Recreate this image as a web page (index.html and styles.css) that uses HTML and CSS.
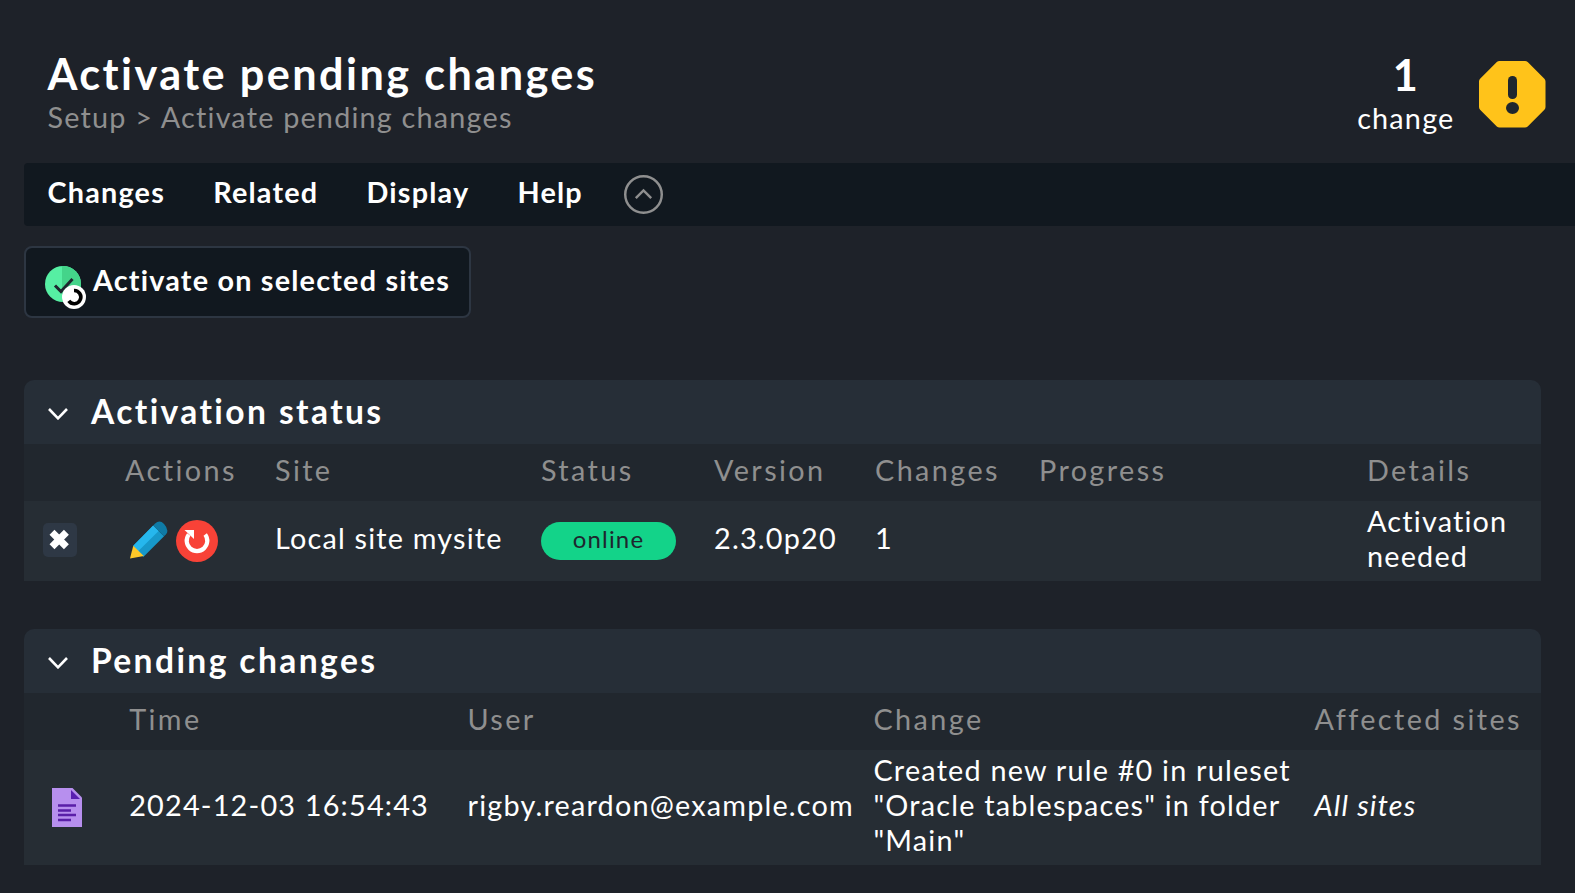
FILE: index.html
```html
<!DOCTYPE html>
<html lang="en">
<head>
<meta charset="utf-8">
<title>Activate pending changes</title>
<link rel="stylesheet" href="styles.css">
</head>
<body>
<header class="top">
  <div class="titles">
    <h1 class="title">Activate pending changes</h1>
    <div class="breadcrumb">Setup &gt; Activate pending changes</div>
  </div>
  <div class="counter">
    <div class="counter-text"><span class="counter-number">1</span><span class="counter-label">change</span></div>
    <svg class="warning" viewBox="0 0 68 68">
      <path d="M21.500 1H47Q48.600 1 49.700 2.100L66.400 18.800Q67.500 19.900 67.500 21.500V47Q67.500 48.600 66.400 49.700L49.700 66.400Q48.600 67.500 47 67.500H21.500Q19.900 67.500 18.800 66.400L2.100 49.700Q1 48.600 1 47V21.500Q1 19.900 2.100 18.800L18.800 2.100Q19.900 1 21.500 1Z" fill="#ffc31a"/>
      <rect x="30" y="16" width="9" height="23" rx="4.300" fill="#1e262e"/>
      <ellipse cx="34.500" cy="48" rx="6.500" ry="6" fill="#1e262e"/>
    </svg>
  </div>
</header>
<nav class="menu">
  <span>Changes</span><span>Related</span><span>Display</span><span>Help</span>
  <svg class="toggle" viewBox="0 0 38 38"><circle cx="19" cy="19" r="17.800"/><path d="M11.500 22.500L19 15L26.500 22.500"/></svg>
</nav>
<button class="activate">
  <svg class="activate-icon" viewBox="0 0 42 44">
    <circle cx="18" cy="18" r="18" fill="#56efa3"/>
    <path d="M17 0H18A18 18 0 0 1 18 36H17Z" fill="#44d48a"/>
    <path d="M10 19.500L16 25.500L27.500 13" fill="none" stroke="#1e262e" stroke-width="3"/>
    <circle cx="29" cy="31" r="12" fill="#fff"/>
    <path d="M29 24.500A6.600 6.600 0 1 1 23.800 34.900" fill="none" stroke="#000" stroke-width="3.600"/>
  </svg>
  <span>Activate on selected sites</span>
</button>
<section class="panel status">
  <h2 class="panel-title"><svg class="chevron" viewBox="0 0 20 12"><path d="M1 1L10 10.300L19 1"/></svg>Activation status</h2>
  <div class="row head"><span></span><span>Actions</span><span>Site</span><span>Status</span><span>Version</span><span>Changes</span><span>Progress</span><span>Details</span></div>
  <div class="row data">
    <span class="check"><svg viewBox="0 0 34 34"><path d="M9 9.300L23.400 23.700M23.400 9.300L9 23.700" stroke="#fff" stroke-width="7"/></svg></span>
    <span class="actions">
      <svg class="pencil" viewBox="0 0 40 40">
        <path d="M4.300 25L24.500 4.500L35.500 15.500L14.500 36.500Z" fill="#1798c9"/>
        <path d="M4.300 25L24.500 4.500L30 10L9 31Z" fill="#26b7ed"/>
        <path d="M24.500 4.500L26.500 2.500Q31-1.500 35.500 3Q41 9 37.500 13.500L35.500 15.500Z" fill="#0f7ba6"/>
        <path d="M4.300 25L15 35.500L1 38Z" fill="#ffc929"/>
      </svg>
      <svg class="restart" viewBox="0 0 42 42">
        <circle cx="21" cy="21" r="21" fill="#f84237"/>
        <path d="M12.800 14.500A10.300 10.300 0 1 0 29.200 14.500" fill="none" stroke="#fff" stroke-width="4.200"/>
        <path d="M8.500 10H18V19Z" fill="#fff"/>
      </svg>
    </span>
    <span>Local site mysite</span>
    <span><b class="badge">online</b></span>
    <span>2.3.0p20</span><span>1</span><span></span><span>Activation needed</span>
  </div>
</section>
<section class="panel pending">
  <h2 class="panel-title"><svg class="chevron" viewBox="0 0 20 12"><path d="M1 1L10 10.300L19 1"/></svg>Pending changes</h2>
  <div class="row head"><span></span><span>Time</span><span>User</span><span>Change</span><span>Affected sites</span></div>
  <div class="row data">
    <svg class="doc" viewBox="0 0 30 39">
      <path d="M0 0H20.500L30 9.500V39H0Z" fill="#b78fee"/>
      <path d="M19 2L28 11H19Z" fill="#5a1fb0"/>
      <path d="M6 17.500H24M6 22.500H19M6 27H24M6 32H19" stroke="#5a1fa8" stroke-width="2.300"/>
    </svg>
    <span>2024-12-03 16:54:43</span><span>rigby.reardon@example.com</span>
    <span>Created new rule #0 in ruleset<br>"Oracle tablespaces" in folder<br>"Main"</span>
    <em>All sites</em>
  </div>
</section>
</body>
</html>
```
FILE: styles.css
```css
* { box-sizing: border-box; }
body {
  margin: 0;
  padding: 50px 0 0 24px;
  height: 893px;
  overflow: hidden;
  background: #1e2229;
  color: #fff;
  font: 28.8px/35px Lato, sans-serif;
  letter-spacing: 1.2px;
}
.top { display: flex; justify-content: space-between; height: 113px; padding: 0 29px 0 23.5px; }
.title { margin: 0; padding-bottom: 4px; font-size: 43.2px; line-height: 46px; letter-spacing: 2.42px; font-weight: 700; }
.breadcrumb { color: #8f8f8f; }
.counter { display: flex; gap: 23.500px; }
.counter-text { display: flex; flex-direction: column; align-items: center; }
.counter-number { padding-bottom: 2px; font-size: 43.2px; font-weight: 700; line-height: 49px; }
.warning { width: 68px; height: 68px; margin-top: 10px; }
.menu {
  display: flex;
  height: 63px;
  padding: 12px 0 0 23.5px;
  gap: 48.100px;
  background: #11181f;
  border-radius: 4px 0 0 4px;
  font-weight: 700;
  letter-spacing: 1.2px;
}
.toggle { width: 39px; height: 39px; margin-left: -7px; fill: none; stroke: #8f8f8f; stroke-width: 2.400; }
.activate {
  display: flex;
  align-items: center;
  width: 447px;
  height: 72px;
  margin: 20px 0 62px;
  padding: 0 0 3px 19px;
  border: 2px solid #2d3642;
  border-radius: 8px;
  background: #11181f;
  color: #fff;
  font: 700 28.8px/35px Lato, sans-serif;
  letter-spacing: 1.2px;
  white-space: nowrap;
}
.activate-icon { flex: none; width: 42px; height: 44px; margin: 14px 5.900px 0 0; }
.panel { width: 1517px; margin-bottom: 48px; }
.panel-title {
  display: flex;
  align-items: center;
  height: 64px;
  margin: 0;
  padding: 0 0 2px 23.500px;
  border-radius: 10px 10px 0 0;
  background: #262e37;
  font-size: 33.6px;
  letter-spacing: 2.4px;
}
.chevron { width: 20px; height: 12px; margin: 6px 23.400px 0 0; fill: none; stroke: #fff; stroke-width: 2.600; }
.row { display: grid; align-items: center; }
.status .row { grid-template-columns: 101px 150px 266px 173px 161px 164px 328px 174px; }
.pending .row { grid-template-columns: 105.200px 338.300px 406px 441px 226.500px; }
.head { height: 57px; padding-bottom: 5px; background: #21272e; color: #8f8f8f; letter-spacing: 2.400px; }
.data { height: 80px; padding-bottom: 5px; background: #262d34; }
.pending .data { height: 115px; }
.row > * { white-space: nowrap; }
.status .data > :last-child { white-space: normal; }
.check { width: 34px; height: 34px; margin: 2px 0 0 19px; border-radius: 5px; background: #2e3845; }
.check svg { display: block; }
.actions { display: flex; align-items: center; gap: 7px; padding: 4px 0 0 4px; }
.pencil { width: 39.500px; height: 39.500px; }
.restart { width: 42px; height: 42px; }
.badge {
  display: block;
  width: 135px;
  height: 38px;
  margin-top: 5px;
  border-radius: 19px;
  background: #13d389;
  color: #1e262e;
  font-size: 24px;
  font-weight: 400;
  line-height: 34px;
  text-align: center;
}
.doc { width: 30px; height: 39px; margin: 5px 0 0 28px; }
```
